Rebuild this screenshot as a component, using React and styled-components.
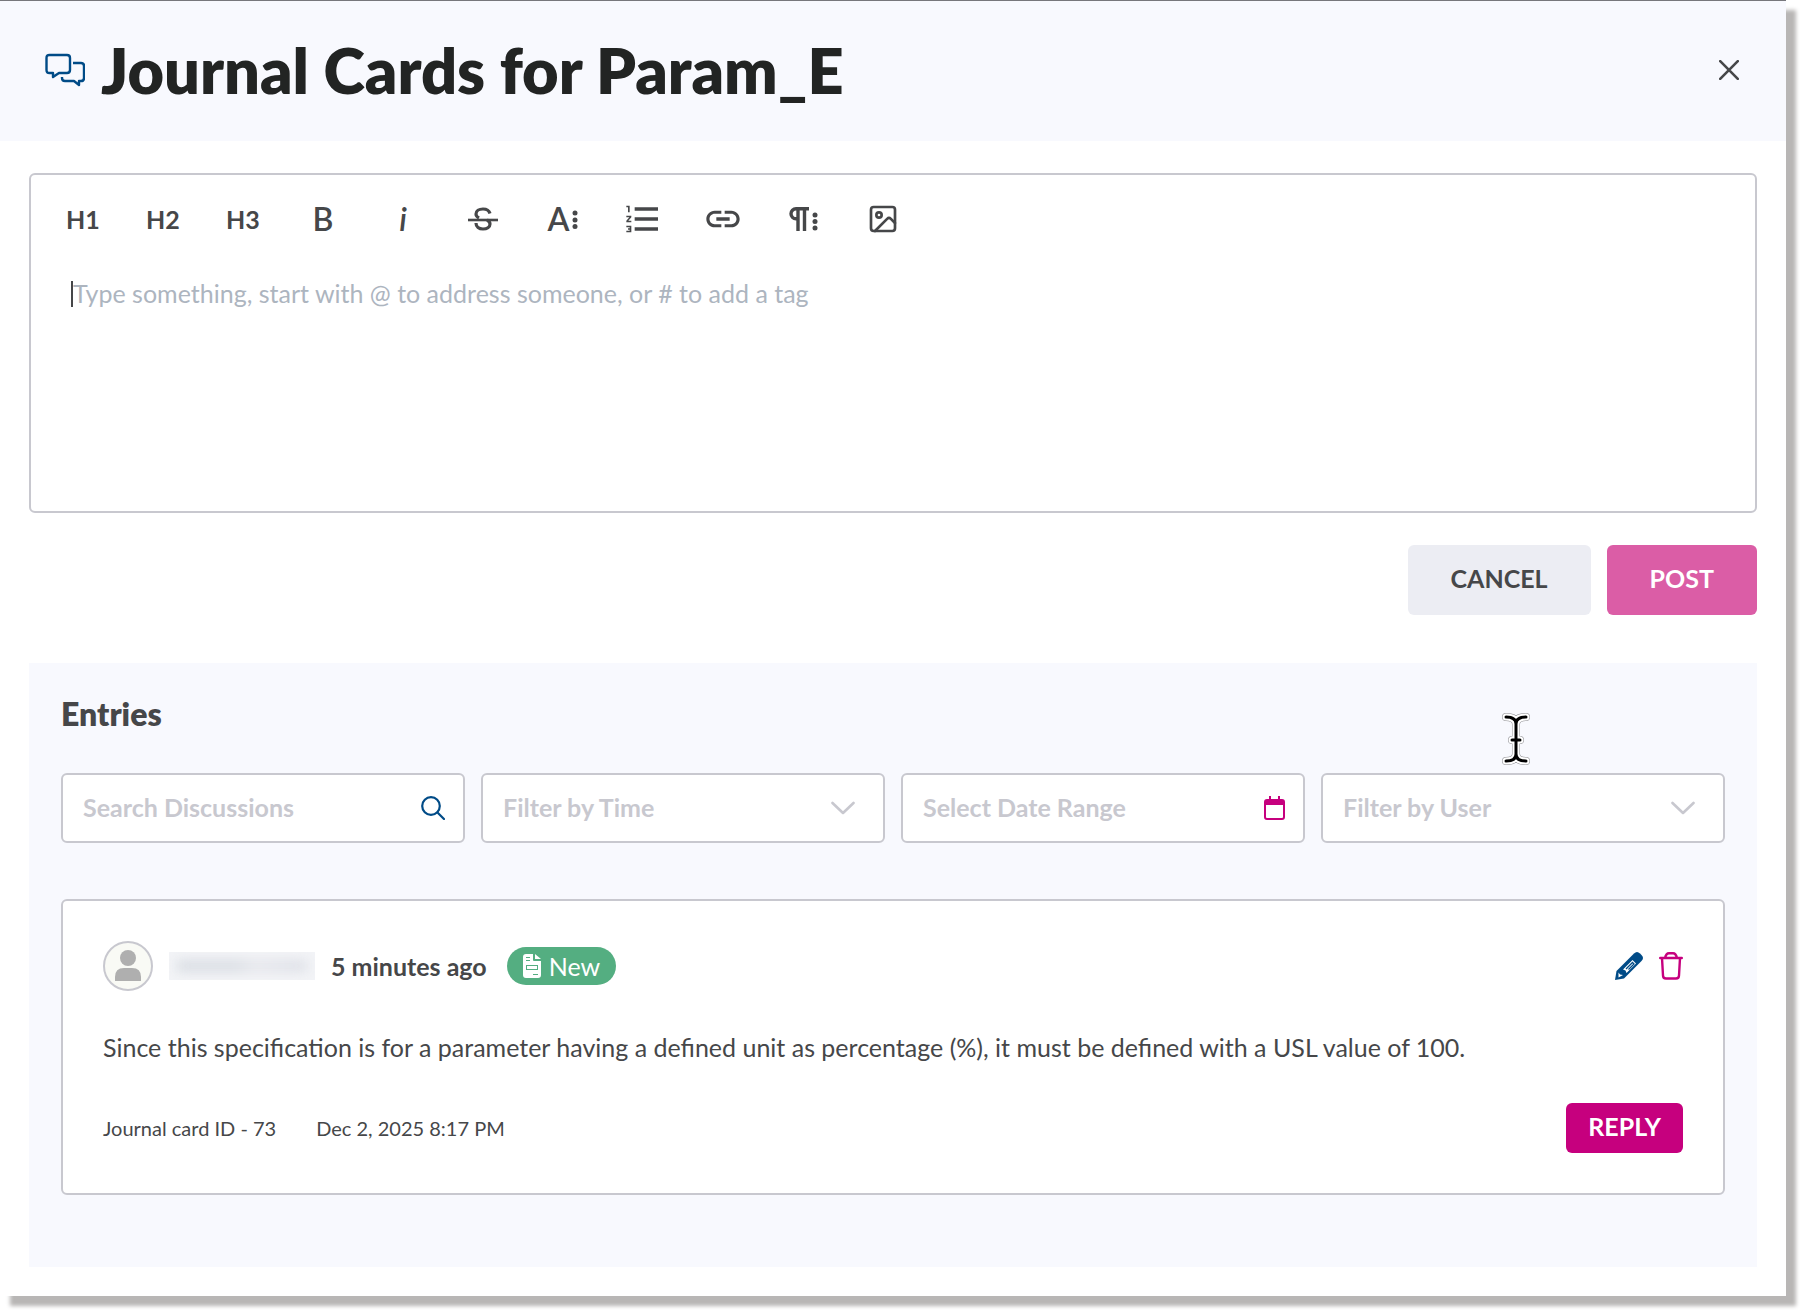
import React from 'react';
import styled, { createGlobalStyle } from 'styled-components';
import { Image as ImageIcon } from 'lucide-react';
import { MdFormatListNumbered, MdInsertLink } from 'react-icons/md';

const GlobalStyle = createGlobalStyle`
  * {
    box-sizing: border-box;
  }
  body {
    margin: 0;
    background: #ffffff;
    color: #464749;
    font-family: Lato, 'Open Sans', sans-serif;
    font-size: 25px;
    line-height: 32px;
  }
  button, input, select, textarea {
    font: inherit;
    color: inherit;
  }
  button {
    cursor: pointer;
  }
`;

const Page = styled.div`
  padding: 0 14px 14px 0;
`;

const Panel = styled.main`
  background: #ffffff;
  box-shadow: 10px 10px 4px #b8b6b5;
`;

const Header = styled.header`
  display: flex;
  align-items: center;
  gap: 16px;
  padding: 33px 47px 35px 45px;
  border-top: 1px solid #77777c;
  background: #f8f9fe;
`;

const Title = styled.h1`
  flex: 1;
  margin: 0;
  color: #222423;
  font-size: 63px;
  font-weight: 800;
  line-height: 72px;
`;

const IconButton = styled.button`
  display: flex;
  padding: 0;
  border: 0;
  background: none;
`;

const Content = styled.div`
  padding: 32px 29px 29px;
`;

const Editor = styled.section`
  border: 2px solid #c8c8cf;
  border-radius: 6px;
`;

const Toolbar = styled.div`
  display: flex;
  padding: 24px 12px 38px;
`;

const Tool = styled.button`
  display: flex;
  align-items: center;
  justify-content: center;
  gap: 3px;
  width: 80px;
  height: 40px;
  padding: 0;
  border: 0;
  background: none;
  font-size: ${props => (props.$large ? 32 : 25)}px;
  font-weight: ${props => (props.$large ? 600 : 700)};
  font-style: ${props => (props.$italic ? 'italic' : 'normal')};
`;

const Message = styled.div`
  display: flex;
  padding: 0 40px 10px;
`;

const Caret = styled.span`
  width: 2px;
  height: 26px;
  margin-top: 4px;
  background: #464749;
`;

const TextArea = styled.textarea`
  display: block;
  flex: 1;
  padding: 0;
  border: 0;
  outline: 0;
  resize: none;
  background: none;
  &::placeholder {
    color: #adb5bf;
    opacity: 1;
  }
`;

const Actions = styled.div`
  display: flex;
  justify-content: flex-end;
  gap: 16px;
  margin: 32px 0 48px;
`;

const Button = styled.button`
  height: ${props => (props.$small ? 50 : 70)}px;
  padding: 0 ${props => (props.$small ? 22 : 43)}px 4px;
  border: 0;
  border-radius: 6px;
  color: #ffffff;
  background: #c6007e;
  font-weight: 700;
  &.cancel {
    color: #464749;
    background: #ecedf3;
  }
  &.muted {
    background: #db5da6;
  }
`;

const Entries = styled.section`
  position: relative;
  padding: 32px 32px 72px;
  background: #f8f9fe;
`;

const Heading = styled.h2`
  margin: 0 0 40px;
  font-size: 32px;
  font-weight: 800;
  line-height: 38px;
`;

const Pointer = styled.svg`
  position: absolute;
  top: 49px;
  right: 227px;
`;

const Filters = styled.div`
  display: grid;
  grid-template-columns: repeat(4, 1fr);
  gap: 16px;
  margin-bottom: 56px;
`;

const Field = styled.label`
  display: flex;
  align-items: center;
  height: 70px;
  padding: 0 ${props => (props.$wide ? 28 : 18)}px 0 20px;
  border: 2px solid #c8c8cf;
  border-radius: 6px;
  background: #ffffff;
  color: #c8c8cf;
  font-weight: 700;
  input,
  select {
    flex: 1;
    min-width: 0;
    padding: 0 0 3px;
    border: 0;
    outline: 0;
    appearance: none;
    background: none;
  }
  input::placeholder {
    color: #c8c8cf;
    opacity: 1;
  }
`;

const Card = styled.article`
  padding: 40px;
  border: 2px solid #c8c8cf;
  border-radius: 6px;
  background: #ffffff;
`;

const CardHeader = styled.div`
  display: flex;
  align-items: center;
`;

const Author = styled.span`
  width: 146px;
  height: 28px;
  margin: 0 16px;
  overflow: hidden;
  background: #f3f4f7;
  &::before {
    content: '';
    display: block;
    height: 12px;
    margin: 8px;
    background: linear-gradient(90deg, #d9dde3 45%, #e6e7ec 60%, #dcdfe6);
    filter: blur(6px);
  }
`;

const Age = styled.span`
  font-weight: 700;
`;

const Badge = styled.span`
  display: flex;
  align-items: center;
  gap: 8px;
  height: 38px;
  margin-left: 20px;
  padding: 0 16px;
  border-radius: 19px;
  color: #ffffff;
  background: #54ae81;
`;

const Tools = styled.div`
  display: flex;
  gap: 16px;
  margin-left: auto;
`;

const Text = styled.p`
  margin: 40px 0;
`;

const CardFooter = styled.footer`
  display: flex;
  align-items: center;
  gap: 40px;
  button {
    margin-left: auto;
  }
`;

const Meta = styled.span`
  font-size: 20px;
`;

const DiscussionIcon = () => (
  <svg
    width="40"
    height="34"
    viewBox="0 0 40 34"
    fill="none"
    stroke="#004b87"
    strokeWidth="2.400"
    strokeLinejoin="round"
  >
    <path d="M4.500 2H22q3 0 3 3v12q0 3-3 3h-8l-6 4v-4H4.500q-3 0-3-3V5q0-3 3-3z" />
    <path d="M28 10h8q3 0 3 3v12q0 3-3 3h-2v4l-5-4h-9q-3 0-3-3v-1" />
  </svg>
);

const CloseIcon = () => (
  <svg
    width="20"
    height="20"
    viewBox="0 0 20 20"
    fill="none"
    stroke="#464749"
    strokeWidth="2.600"
    strokeLinecap="round"
  >
    <path d="M1.200 1.200l17.600 17.600M18.800 1.200L1.200 18.800" />
  </svg>
);

const StrikeIcon = () => (
  <svg
    width="30"
    height="26"
    viewBox="0 0 30 26"
    fill="none"
    stroke="currentColor"
    strokeWidth="3.200"
  >
    <path d="M0 14h30" strokeWidth="2.600" />
    <path d="M22 7.500C21 4 18 3 15 3c-4 0-7 2-7 5 0 2 1 3 3 4" />
    <path d="M8 17c0 4 3 6 7 6s7-2 7-5c0-2-1-3-3-4" />
  </svg>
);

const DotsIcon = () => (
  <svg width="6" height="20" viewBox="0 0 6 20" fill="currentColor">
    <circle cx="3" cy="4" r="2.500" />
    <circle cx="3" cy="11" r="2.500" />
    <circle cx="3" cy="17.500" r="2.500" />
  </svg>
);

const ParagraphIcon = () => (
  <svg width="29" height="24" viewBox="0 0 29 24">
    <path
      d="M20 1.800H7a5 5 0 0 0 0 10h2V24M15.500 2v22M9 2v12"
      fill="none"
      stroke="currentColor"
      strokeWidth="3.400"
    />
    <g fill="currentColor">
      <circle cx="26" cy="8" r="2.500" />
      <circle cx="26" cy="14.500" r="2.500" />
      <circle cx="26" cy="21" r="2.500" />
    </g>
  </svg>
);

const SearchIcon = () => (
  <svg
    width="24"
    height="24"
    viewBox="0 0 24 24"
    fill="none"
    stroke="#004b87"
    strokeWidth="2.200"
    strokeLinecap="round"
  >
    <circle cx="10" cy="10" r="8.800" />
    <path d="M16.500 16.500L23 23" />
  </svg>
);

const ChevronIcon = () => (
  <svg
    width="24"
    height="14"
    viewBox="0 0 24 14"
    fill="none"
    stroke="#c8c8cf"
    strokeWidth="2.600"
    strokeLinecap="round"
    strokeLinejoin="round"
  >
    <path d="M1.500 2L12 12 22.500 2" />
  </svg>
);

const CalendarIcon = () => (
  <svg width="21" height="24" viewBox="0 0 21 24" fill="#c6007e">
    <path
      fillRule="evenodd"
      d="M5 0h2v3h7V0h2v3h2q3 0 3 3v15q0 3-3 3H3q-3 0-3-3V6q0-3 3-3h2zM2 9v12q0 1 1 1h15q1 0 1-1V9z"
    />
  </svg>
);

const Avatar = () => (
  <svg width="50" height="50" viewBox="0 0 50 50">
    <circle cx="25" cy="25" r="24" fill="#f9faf5" stroke="#c8c8cf" strokeWidth="2" />
    <circle cx="25" cy="17" r="8" fill="#afafaf" />
    <path d="M12 40v-4q0-9 9-9h8q9 0 9 9v4z" fill="#afafaf" />
  </svg>
);

const DocumentIcon = () => (
  <svg width="18" height="24" viewBox="0 0 18 24" fill="#ffffff">
    <path
      fillRule="evenodd"
      d="M3 0h7v6q0 1 1 1h7v14q0 3-3 3H3q-3 0-3-3V3q0-3 3-3zM3 3v1h4V3zM3 6v1h4V6zM3 11v5h12v-5zM10 20v1h5v-1zM4 12h10v3H4z"
    />
    <path d="M12 0l6 5h-6z" />
  </svg>
);

const PencilIcon = () => (
  <svg width="28" height="28" viewBox="0 0 28 28">
    <path d="M1.500 19L19 1.500q3-3 6 0l1.500 1.500q3 3 0 6L9 26.500 0 28z" fill="#004b87" />
    <path d="M3.500 20.500l1.500 2 3 .500-4.500 2.500z" fill="#ffffff" />
    <path
      d="M8 17.500L17.500 8l3.500 3.500-9.500 9.500-1-2.500z"
      fill="#ffffff"
    />
    <path d="M11 17l6.500-6.500 1.500 1.500-5.500 5.500" fill="none" stroke="#004b87" strokeWidth="1.300" />
  </svg>
);

const TrashIcon = () => (
  <svg
    width="24"
    height="28"
    viewBox="0 0 24 28"
    fill="none"
    stroke="#c6007e"
    strokeWidth="2.400"
    strokeLinecap="round"
    strokeLinejoin="round"
  >
    <path d="M1.200 6h21.600M3 6l1 17.500q0 3 3 3h10q3 0 3-3L21 6M6 6q1-4.800 4-4.800h4q3 0 4 4.800" />
  </svg>
);

const App = () => {
  return (
    <Page>
      <GlobalStyle />
      <Panel>
        <Header>
          <DiscussionIcon />
          <Title>Journal Cards for Param_E</Title>
          <IconButton type="button" aria-label="Close">
            <CloseIcon />
          </IconButton>
        </Header>
        <Content>
          <Editor>
            <Toolbar>
              <Tool type="button">H1</Tool>
              <Tool type="button">H2</Tool>
              <Tool type="button">H3</Tool>
              <Tool type="button" aria-label="Bold" $large>
                B
              </Tool>
              <Tool type="button" aria-label="Italic" $large $italic>
                i
              </Tool>
              <Tool type="button" aria-label="Strikethrough">
                <StrikeIcon />
              </Tool>
              <Tool type="button" aria-label="More text" $large>
                A<DotsIcon />
              </Tool>
              <Tool type="button" aria-label="Ordered list">
                <MdFormatListNumbered size={40} />
              </Tool>
              <Tool type="button" aria-label="Insert link">
                <MdInsertLink size={40} />
              </Tool>
              <Tool type="button" aria-label="More paragraph">
                <ParagraphIcon />
              </Tool>
              <Tool type="button" aria-label="Insert image">
                <ImageIcon size={32} strokeWidth={2} />
              </Tool>
            </Toolbar>
            <Message>
              <Caret />
              <TextArea
                rows={7}
                aria-label="Journal entry"
                placeholder="Type something, start with @ to address someone, or # to add a tag"
              />
            </Message>
          </Editor>
          <Actions>
            <Button type="button" className="cancel">
              CANCEL
            </Button>
            <Button type="button" className="muted">
              POST
            </Button>
          </Actions>
          <Entries>
            <Heading>Entries</Heading>
            <Filters>
              <Field>
                <input aria-label="Search Discussions" placeholder="Search Discussions" />
                <SearchIcon />
              </Field>
              <Field $wide>
                <select aria-label="Filter by Time">
                  <option>Filter by Time</option>
                </select>
                <ChevronIcon />
              </Field>
              <Field>
                <input aria-label="Select Date Range" placeholder="Select Date Range" />
                <CalendarIcon />
              </Field>
              <Field $wide>
                <select aria-label="Filter by User">
                  <option>Filter by User</option>
                </select>
                <ChevronIcon />
              </Field>
            </Filters>
            <Card>
              <CardHeader>
                <Avatar />
                <Author />
                <Age>5 minutes ago</Age>
                <Badge>
                  <DocumentIcon />
                  New
                </Badge>
                <Tools>
                  <IconButton type="button" aria-label="Edit">
                    <PencilIcon />
                  </IconButton>
                  <IconButton type="button" aria-label="Delete">
                    <TrashIcon />
                  </IconButton>
                </Tools>
              </CardHeader>
              <Text>
                Since this specification is for a parameter having a defined unit as
                percentage (%), it must be defined with a USL value of 100.
              </Text>
              <CardFooter>
                <Meta>Journal card ID - 73</Meta>
                <Meta>Dec 2, 2025 8:17 PM</Meta>
                <Button type="button" $small>
                  REPLY
                </Button>
              </CardFooter>
            </Card>
            <Pointer width="28" height="54" viewBox="0 0 28 54" fill="none" strokeLinecap="round">
              <path
                d="M4 5q10 0 10 7v30q0 7-10 7M24 5q-10 0-10 7v30q0 7 10 7M10 28h8"
                stroke="#8c8c90"
                strokeWidth="8"
              />
              <path
                d="M4 5q10 0 10 7v30q0 7-10 7M24 5q-10 0-10 7v30q0 7 10 7M10 28h8"
                stroke="#ffffff"
                strokeWidth="7"
              />
              <path
                d="M4 5q10 0 10 7v30q0 7-10 7M24 5q-10 0-10 7v30q0 7 10 7M10 28h8"
                stroke="#000000"
                strokeWidth="3"
              />
            </Pointer>
          </Entries>
        </Content>
      </Panel>
    </Page>
  );
};

export default App;
